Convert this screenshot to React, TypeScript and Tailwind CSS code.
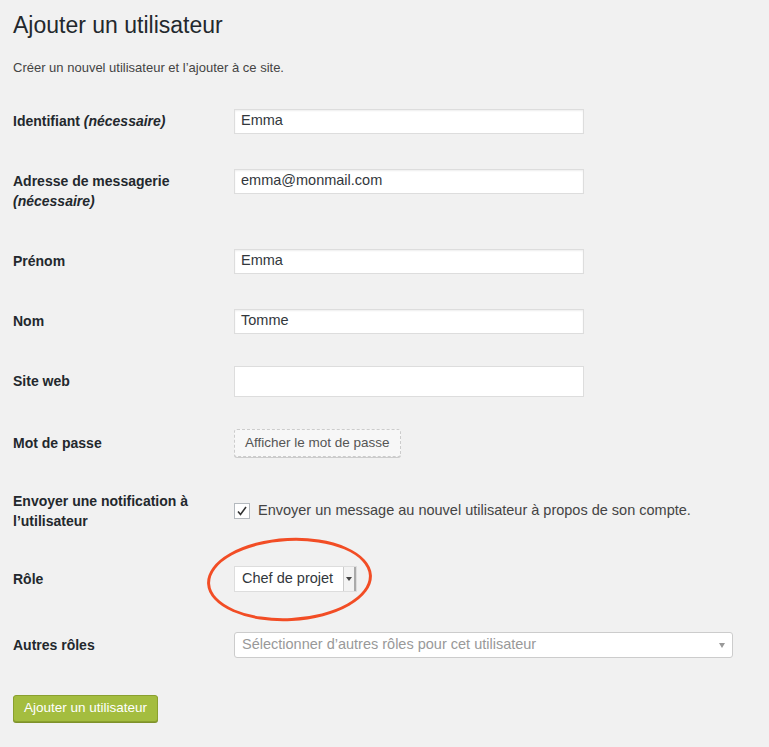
const Input = ({ value, w = "w-[350px]" }: { value?: string; w?: string }) => (
  <div className={`${w} h-[25px] bg-white border border-[#ddd] shadow-[inset_0_1px_2px_rgba(0,0,0,0.07)] px-[6px] flex items-center text-[14.5px] text-[#32373c]`}>
    {value}
  </div>
);

const Row = ({ h, label, children }: { h: string; label: React.ReactNode; children: React.ReactNode }) => (
  <div className={`flex items-center ${h}`}>
    <div className="w-[221px] shrink-0 text-[14px] font-semibold text-[#23282d] leading-[20px] pr-4">{label}</div>
    {children}
  </div>
);

const Req = () => <i className="font-semibold">(nécessaire)</i>;

export default function App() {
  return (
    <div className="w-[769px] h-[747px] bg-[#f1f1f1] pl-[13px] pt-[10px] relative overflow-hidden" style={{ fontFamily: "'Liberation Sans', Arial, sans-serif" }}>
      <h1 className="text-[23px] leading-[30px] text-[#23282d]">Ajouter un utilisateur</h1>
      <p className="mt-[19px] text-[13px] leading-[18px] text-[#444]">Créer un nouvel utilisateur et l’ajouter à ce site.</p>
      <div className="mt-[14px]">
        <Row h="h-[60px]" label={<>Identifiant <Req /></>}><Input value="Emma" /></Row>
        <Row h="h-[80px]" label={<>Adresse de messagerie<br /><Req /></>}><div className="-mt-[20px]"><Input value="emma@monmail.com" /></div></Row>
        <Row h="h-[60px]" label="Prénom"><Input value="Emma" /></Row>
        <Row h="h-[60px]" label="Nom"><Input value="Tomme" /></Row>
        <Row h="h-[60px]" label="Site web"><div className="h-[31px] w-[350px] bg-white border border-[#ddd]" /></Row>
        <Row h="h-[64px]" label="Mot de passe">
          <div className="h-[28px] px-[10px] flex items-center border border-dashed border-[#ccc] rounded-[3px] bg-[#f7f7f7] text-[13.5px] text-[#555] shadow-[0_1px_0_#ccc]">Afficher le mot de passe</div>
        </Row>
        <Row h="h-[72px]" label={<>Envoyer une notification à<br />l’utilisateur</>}>
          <div className="flex items-center gap-[8px] text-[14.5px] text-[#444]">
            <div className="w-[16px] h-[16px] bg-white border border-[#b4b9be] flex items-center justify-center">
              <svg width="12" height="12" viewBox="0 0 12 12"><path d="M2 6.5l2.5 3L10 2" stroke="#333" strokeWidth="1.6" fill="none" /></svg>
            </div>
            Envoyer un message au nouvel utilisateur à propos de son compte.
          </div>
        </Row>
        <Row h="h-[64px]" label="Rôle">
          <div className="h-[26px] flex items-center bg-white border border-[#ddd] text-[14.5px] text-[#32373c]">
            <span className="px-[7px] w-[108px]">Chef de projet</span>
            <div className="w-[13px] h-full border-l border-[#ccc] border-r-2 border-r-[#aaa] bg-[#f3f3f3] flex items-center justify-center">
              <span className="border-x-[3px] border-x-transparent border-t-[4px] border-t-[#444]" />
            </div>
          </div>
        </Row>
        <Row h="h-[68px]" label="Autres rôles">
          <div className="w-[499px] h-[26px] bg-white border border-[#ccc] rounded-[3px] flex items-center justify-between px-[7px] text-[14.5px] text-[#999]">
            Sélectionner d’autres rôles pour cet utilisateur
            <span className="border-x-[3px] border-x-transparent border-t-[5px] border-t-[#999]" />
          </div>
        </Row>
      </div>
      <button className="mt-[16px] h-[27px] px-[10px] bg-[#a4bd3f] border border-[#8aa02f] rounded-[3px] text-[13.5px] text-white shadow-[0_1px_0_#7f922b]">Ajouter un utilisateur</button>
      <div className="absolute left-[207px] top-[538px] w-[165px] h-[83px] rounded-[50%] border-[3px] border-[#f24d25] rotate-[-3deg]" />
    </div>
  );
}
